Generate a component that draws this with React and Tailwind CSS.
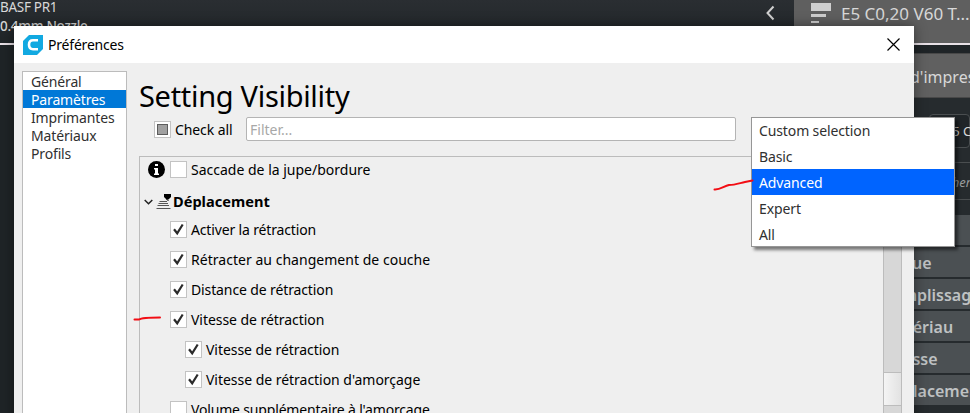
import React from 'react';

const pages = ['Général', 'Paramètres', 'Imprimantes', 'Matériaux', 'Profils'];

const presets = ['Custom selection', 'Basic', 'Advanced', 'Expert', 'All'];

const settings = [
  { label: 'Activer la rétraction', checked: true, tracking: 'tracking-[-0.15px]' },
  { label: 'Rétracter au changement de couche', checked: true, tracking: 'tracking-[0.03px]' },
  { label: 'Distance de rétraction', checked: true, tracking: 'tracking-[-0.12px]' },
  { label: 'Vitesse de rétraction', checked: true, tracking: 'tracking-[-0.05px]' },
  { label: 'Vitesse de rétraction', checked: true, nested: true, tracking: 'tracking-[-0.05px]' },
  { label: "Vitesse de rétraction d'amorçage", checked: true, nested: true, tracking: 'tracking-[-0.03px]' },
  { label: "Volume supplémentaire à l'amorçage", checked: false, tracking: 'tracking-[-0.17px]' },
];

const categories = ['', 'Coque', 'Remplissage', 'Matériau', 'Vitesse', 'Déplacement'];

const CheckBox = ({ checked, partial }) => (
  <span className="flex h-[17px] w-[17px] shrink-0 items-center justify-center border border-[#c3c3c3] bg-white">
    {partial && <span className="h-[11px] w-[11px] border border-[#5c5c5c] bg-[#a0a0a0]"></span>}
    {checked && (
      <svg className="h-[15px] w-[15px]" viewBox="0 0 15 15" fill="none">
        <path d="M3 7.3L6.2 11.3L11.7 2.5" stroke="#2b2b2b" strokeWidth="2.2" />
      </svg>
    )}
  </span>
);

const SettingRow = ({ label, checked, nested, tracking }) => (
  <div className={`flex h-[30px] shrink-0 items-center gap-1 ${nested ? 'pl-[45px]' : 'pl-[30px]'}`}>
    <CheckBox checked={checked} />
    <span className={`whitespace-nowrap ${tracking}`}>{label}</span>
  </div>
);

// Main window that stays visible behind the dialog
const Backdrop = () => (
  <div className="flex h-full flex-col bg-[#1f2427] text-[#d8d8d8]">
    <div className="flex h-[43px] shrink-0 bg-linear-to-b from-[#2a2e32] to-[#202528]">
      <div className="w-[763px] text-[13.5px] leading-[17px] tracking-[-0.3px]">
        <div className="leading-[15px]">BASF PR1</div>
        <div className="mt-[3px] font-medium">0.4mm Nozzle</div>
      </div>
      <svg className="mt-[5px] h-[16px] w-[31px]" viewBox="0 0 31 16" fill="none">
        <path d="M10.5 1.5L4.5 8L10.5 14.5" stroke="#d0d0d0" strokeWidth="2" />
      </svg>
      <div className="flex flex-1 overflow-hidden bg-[#5f5f5f] pl-[17px]">
        <svg className="h-[24px] w-[20px] shrink-0" viewBox="0 0 20 24" fill="#cfcfcf">
          <rect y="3" width="20" height="8" />
          <rect y="14" width="15" height="3" />
          <rect y="21" width="8" height="2" />
        </svg>
        <span className="ml-[10px] whitespace-nowrap text-[17px] leading-[28px]">E5 C0,20 V60 T...</span>
      </div>
    </div>
    <div className="h-[2px] shrink-0 bg-[#e8e0e6]"></div>
    <div className="mt-[8px] ml-[900px] flex h-[45px] shrink-0 items-center border-y border-[#484848] bg-[#606060] pt-[2px] pl-[10px] text-[16px]">
      <span className="whitespace-nowrap">d'impression</span>
    </div>
    <div className="ml-[900px] flex h-[117px] shrink-0 flex-col bg-[#262b2e] pt-4 pl-[29px]">
      <div className="flex h-[34px] items-center rounded-sm border border-[#4a4e50] bg-[#202528] pt-[2px] pl-[15px] text-[13px] whitespace-nowrap">E5 C0,20</div>
      <div className="mt-[14px] flex h-[38px] items-center border-y border-[#4a4e50] pt-[3px] pl-[3px] text-[13px] text-[#9a9d9f] italic whitespace-nowrap">Rechercher</div>
    </div>
    <div className="ml-[870px] flex flex-1 flex-col gap-[2px] overflow-hidden bg-[#262b2e] text-[16px] font-semibold text-[#bfc2c3]">
      {categories.map((category) => (
        <div key={category} className="flex h-[30px] shrink-0 items-center bg-[#4b5053] pt-px pl-3 whitespace-nowrap">
          {category}
        </div>
      ))}
    </div>
  </div>
);

const TitleBar = () => (
  <div className="flex h-[37px] shrink-0 items-center bg-white pr-[14px] pl-[9px] text-[14px] text-black">
    <svg className="h-[20px] w-[20px]" viewBox="0 0 20 20">
      <path d="M6 0H20V14L14 20H0V6Z" fill="#12a9e1" />
      <path d="M15 5.3H10Q6 5.3 6 9.8Q6 14.2 10 14.2H15" fill="none" stroke="white" strokeWidth="2.6" />
    </svg>
    <span className="ml-[5px] flex-1 tracking-[-0.2px]">Préférences</span>
    <svg className="h-[13px] w-[13px]" viewBox="0 0 13 13" stroke="black" strokeWidth="1.2">
      <path d="M0.5 0.5L12.5 12.5M12.5 0.5L0.5 12.5" />
    </svg>
  </div>
);

const Sidebar = () => (
  <ul className="h-[360px] w-[105px] shrink-0 border border-[#bcbcbc] bg-white tracking-[-0.15px] text-[#303030]">
    {pages.map((page) => (
      <li
        key={page}
        className={`h-[18px] pl-[8px] leading-[19px] ${page === 'Paramètres' ? 'bg-[#0078d7] text-white' : ''}`}
      >
        {page}
      </li>
    ))}
  </ul>
);

const Visibility = () => (
  <main className="flex w-[763px] shrink-0 flex-col text-black">
    <h1 className="h-[46px] text-[29px] leading-[50px] tracking-[-0.3px]">Setting Visibility</h1>
    <div className="flex h-[24px] items-center pl-[15px]">
      <CheckBox partial />
      <span className="ml-1 w-[71px] tracking-[-0.1px]">Check all</span>
      <div className="h-[24px] w-[490px] rounded-[2px] border border-[#b4b4b4] bg-white pl-[3px] leading-[23px] text-[#a8a8a8]">Filter...</div>
    </div>
    <div className="mt-[15px] flex h-[300px] shrink-0 overflow-hidden border border-[#bcbcbc]">
      <div className="flex flex-1 flex-col">
        <div className="-mt-[3px] flex h-[30px] shrink-0 items-center pl-[8px]">
          <svg className="mr-[5px] h-[17px] w-[17px]" viewBox="0 0 17 17">
            <circle cx="8.5" cy="8.5" r="8.5" fill="black" />
            <path d="M7 3H10V5H7ZM6 7H10V12.5H11V14H6V12.5H7V8.5H6Z" fill="white" />
          </svg>
          <CheckBox />
          <span className="ml-1">Saccade de la jupe/bordure</span>
        </div>
        <div className="flex h-[30px] shrink-0 items-center pt-[5px] pl-[4px]">
          <svg className="h-[8px] w-[9px]" viewBox="0 0 9 8" fill="none">
            <path d="M0.7 2L4.5 5.8L8.3 2" stroke="#222" strokeWidth="1.5" />
          </svg>
          <svg className="ml-[3px] h-[17px] w-[16px]" viewBox="0 0 16 17">
            <path d="M8 1H15V4L12.5 6.5H10.5L8 4Z" fill="black" />
            <path d="M10.5 6L12.5 8" stroke="black" strokeWidth="1" />
            <path d="M3.5 8.5H11M2.5 10.5H12M1.5 12.5H13M0.5 15.5H14.5" stroke="#555" strokeWidth="1" />
          </svg>
          <span className="mt-px ml-[1px] text-[14.6px] font-bold">Déplacement</span>
        </div>
        {settings.map((setting, i) => (
          <SettingRow key={i} {...setting} />
        ))}
      </div>
      <div className="w-[18px] border-l border-[#bcbcbc] bg-[#d7d7d7] pt-[215px]">
        <div className="h-[34px] border-y border-[#bcbcbc] bg-linear-to-r from-[#f4f4f4] to-[#e2e2e2]"></div>
      </div>
    </div>
  </main>
);

const PresetMenu = () => (
  <div className="absolute top-[117px] left-[751px] h-[130px] w-[204px] border border-[#969696] bg-white tracking-[-0.12px] text-[#303030] shadow-[3px_3px_3px_rgba(0,0,0,0.5)]">
    <div className="-mt-px">
      {presets.map((preset) => (
        <div
          key={preset}
          className={`h-[26px] pl-[7px] leading-[28px] ${preset === 'Advanced' ? 'bg-[#0064ff] text-white' : ''}`}
        >
          {preset}
        </div>
      ))}
    </div>
  </div>
);

const App = () => {
  return (
    <div className="relative h-[413px] w-[970px] overflow-hidden font-['Noto_Sans',sans-serif] text-[14px]">
      <Backdrop />

      <div className="absolute top-[26px] left-[14px] flex h-[420px] w-[900px] flex-col bg-[#efefef] shadow-[0_0_12px_rgba(0,0,0,0.45)]">
        <TitleBar />
        <div className="flex gap-3 pt-2 pl-2">
          <Sidebar />
          <Visibility />
        </div>
      </div>

      <PresetMenu />

      {/* Hand-drawn marks */}
      <svg className="absolute inset-0 h-full w-full" viewBox="0 0 970 413" fill="none" stroke="#f20d14" strokeWidth="2" strokeLinecap="round">
        <path d="M714.5 189.5C720 190 724 186 729 185C735 185 740 183 745 182L752.5 180.5" />
        <path d="M134.5 319.5H139C142 317.5 148 317.5 160 317.5" />
      </svg>
    </div>
  );
};

export default App;
